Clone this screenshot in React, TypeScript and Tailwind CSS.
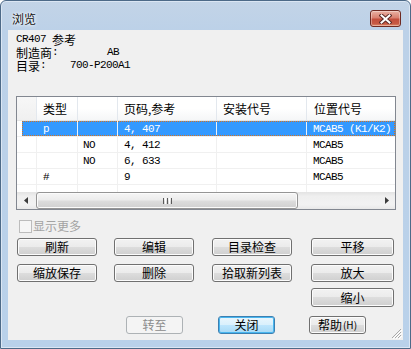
import React from 'react'

const MONO = "font-['Liberation_Mono','Noto_Sans_CJK_SC',monospace] text-[11px] tracking-[-0.6px]"
const CJK = "font-['Noto_Sans_CJK_SC',sans-serif] text-[12px]"

const rows = [
  { type: 'p', no: '', page: '4, 407', install: '', loc: 'MCAB5 (K1/K2)', selected: true },
  { type: '', no: 'NO', page: '4, 412', install: '', loc: 'MCAB5', selected: false },
  { type: '', no: 'NO', page: '6, 633', install: '', loc: 'MCAB5', selected: false },
  { type: '#', no: '', page: '9', install: '', loc: 'MCAB5', selected: false },
]

function Btn({ label, kind = 'normal', wide = false }: { label: string; kind?: 'normal' | 'default' | 'disabled'; wide?: boolean }) {
  const base = 'h-[18px] rounded-[3px] border flex items-center justify-center leading-none ' + CJK
  const size = wide ? ' w-[83px]' : ' w-[80px]'
  if (kind === 'disabled') {
    return <div className={base + ' w-[57px] border-[#adb2b5] bg-[#f4f4f4] text-[#8b8b8b]'}>{label}</div>
  }
  if (kind === 'default') {
    return (
      <div className={base + ' w-[57px] border-[#3c7fb1] bg-[linear-gradient(#eaf6fd_0%,#d9f0fc_50%,#bee6fd_50%,#a7d9f5_100%)] shadow-[inset_0_0_0_1px_#48b6ef] text-black'}>
        {label}
      </div>
    )
  }
  return (
    <div className={base + size + ' border-[#707070] bg-[linear-gradient(#f2f2f2_0%,#ebebeb_50%,#dddddd_50%,#cfcfcf_100%)] shadow-[inset_0_0_0_1px_#fcfcfc] text-black'}>
      {label}
    </div>
  )
}

export default function App() {
  return (
    <div className="w-[411px] h-[349px] rounded-t-[6px] border border-[#4d6a88] bg-[linear-gradient(#c3d4e7_0px,#bcd1e8_30px,#b9d1ea_100%)] shadow-[inset_0_0_0_1px_#dbe6f3] flex flex-col select-none">
      {/* title bar */}
      <div className="h-[29px] pt-[6px] flex items-center">
        <span className={CJK + ' ml-[11px] text-[#111] [text-shadow:0_0_5px_#fff,0_0_3px_#fff]'}>浏览</span>
        <div className="ml-auto mr-[9px] w-[31px] h-[17px] rounded-[3px] border border-[#6e2a22] bg-[linear-gradient(#e9b2a4_0%,#d98070_45%,#c24e3c_55%,#c75a44_85%,#e09070_100%)] shadow-[inset_0_0_0_1px_rgba(255,255,255,0.35)] flex items-center justify-center">
          <svg width="13" height="10" viewBox="0 0 13 10">
            <path d="M2.5 1.5 L10.5 8.5 M10.5 1.5 L2.5 8.5" stroke="#5a2a26" strokeWidth="4" strokeLinecap="square" />
            <path d="M2.5 1.5 L10.5 8.5 M10.5 1.5 L2.5 8.5" stroke="#fff" strokeWidth="2" strokeLinecap="square" />
          </svg>
        </div>
      </div>

      {/* client area */}
      <div className="relative mx-[7px] mb-[8px] flex-1 bg-[#f0f0f0] flex flex-col">
        <div className="h-[66px] pt-[3px] pl-[8px] text-black">
          <div className="h-[13px] flex items-center leading-none">
            <span className={MONO + ' whitespace-pre'}>CR407 </span>
            <span className={CJK}>参考</span>
          </div>
          <div className="h-[13px] flex items-center leading-none">
            <span className="w-[91px] flex items-center">
              <span className={CJK}>制造商</span>
              <span className={MONO}>:</span>
            </span>
            <span className={MONO}>AB</span>
          </div>
          <div className="h-[13px] flex items-center leading-none">
            <span className="w-[54px] flex items-center">
              <span className={CJK}>目录</span>
              <span className={MONO}>:</span>
            </span>
            <span className={MONO}>700-P200A1</span>
          </div>
        </div>

        {/* list view */}
        <div className="ml-[8px] w-[380px] h-[114px] border border-[#828790] bg-white flex flex-col">
          <div className={'h-[24px] grid grid-cols-[20px_41px_40px_99px_90px_1fr] border-b border-[#e5e5e5] bg-[linear-gradient(#ffffff,#ffffff_50%,#f5f6f7)] text-black ' + CJK}>
            <div className="border-r border-[#e3e8ee] bg-[linear-gradient(#f7f7f7,#f0f0f0)]" />
            <div className="border-r border-[#e3e8ee] pl-[6px] flex items-center">类型</div>
            <div className="border-r border-[#e3e8ee]" />
            <div className="border-r border-[#e3e8ee] pl-[6px] flex items-center">页码,参考</div>
            <div className="border-r border-[#e3e8ee] pl-[6px] flex items-center">安装代号</div>
            <div className="pl-[7px] flex items-center">位置代号</div>
          </div>

          {rows.map((r, i) =>
            r.selected ? (
              <div key={i} className="h-[16px] pl-[5px] border-b border-[#f0f0f0]">
                <div className={'h-full grid grid-cols-[15px_41px_40px_99px_90px_1fr] bg-[#3399ff] text-white outline outline-1 outline-dotted outline-offset-[-1px] outline-[#d7731f] ' + MONO}>
                  <div />
                  <div className="border-r border-[#e8f2fc] pl-[6px] flex items-center">{r.type}</div>
                  <div className="border-r border-[#e8f2fc] pl-[5px] flex items-center">{r.no}</div>
                  <div className="border-r border-[#e8f2fc] pl-[6px] flex items-center">{r.page}</div>
                  <div className="border-r border-[#e8f2fc] pl-[6px] flex items-center">{r.install}</div>
                  <div className="pl-[6px] flex items-center whitespace-pre">{r.loc}</div>
                </div>
              </div>
            ) : (
              <div key={i} className={'h-[16px] grid grid-cols-[20px_41px_40px_99px_90px_1fr] border-b border-[#f0f0f0] text-black ' + MONO}>
                <div className="border-r border-[#f0f0f0]" />
                <div className="border-r border-[#f0f0f0] pl-[6px] flex items-center">{r.type}</div>
                <div className="border-r border-[#f0f0f0] pl-[5px] flex items-center">{r.no}</div>
                <div className="border-r border-[#f0f0f0] pl-[6px] flex items-center">{r.page}</div>
                <div className="border-r border-[#f0f0f0] pl-[6px] flex items-center">{r.install}</div>
                <div className="pl-[6px] flex items-center">{r.loc}</div>
              </div>
            )
          )}
          <div className="flex-1 grid grid-cols-[20px_41px_40px_99px_90px_1fr]">
            <div className="border-r border-[#f0f0f0]" />
            <div className="border-r border-[#f0f0f0]" />
            <div className="border-r border-[#f0f0f0]" />
            <div className="border-r border-[#f0f0f0]" />
            <div className="border-r border-[#f0f0f0]" />
            <div />
          </div>

          {/* horizontal scrollbar */}
          <div className="h-[17px] flex bg-[linear-gradient(#e3e3e3,#efefef_25%,#f2f2f2_75%,#e8e8e8)]">
            <div className="w-[17px] flex items-center justify-center">
              <svg width="4" height="7" viewBox="0 0 4 7">
                <path d="M4 0 L0 3.5 L4 7 Z" fill="#3c3c3c" />
              </svg>
            </div>
            <div className="flex-1 flex">
              <div className="ml-[2px] w-[262px] rounded-[3px] border border-[#959595] bg-[linear-gradient(#f6f6f6,#ececec_45%,#dcdcdc_55%,#d0d0d0)] shadow-[inset_0_0_0_1px_#fbfbfb] flex items-center justify-center gap-[1px]">
                <div className="w-[1px] h-[6px] bg-[#5a5a5a]" />
                <div className="w-[1px] h-[6px] bg-white" />
                <div className="w-[1px] h-[6px] bg-[#5a5a5a]" />
                <div className="w-[1px] h-[6px] bg-white" />
                <div className="w-[1px] h-[6px] bg-[#5a5a5a]" />
              </div>
            </div>
            <div className="w-[17px] flex items-center justify-center">
              <svg width="4" height="7" viewBox="0 0 4 7">
                <path d="M0 0 L4 3.5 L0 7 Z" fill="#3c3c3c" />
              </svg>
            </div>
          </div>
        </div>

        {/* show more */}
        <div className="mt-[9px] ml-[11px] h-[14px] flex items-center">
          <div className="w-[13px] h-[13px] border border-[#bcbcbc] bg-[#f6f6f6]" />
          <span className={CJK + ' ml-[1px] text-[#a3a3a3] leading-none'}>显示更多</span>
        </div>

        {/* buttons */}
        <div className="mt-[5px] pl-[9px] grid grid-cols-[97px_98px_99px_83px] grid-rows-[26px_24px_19px] items-start">
          <Btn label="刷新" />
          <Btn label="编辑" />
          <Btn label="目录检查" />
          <Btn label="平移" wide />
          <Btn label="缩放保存" />
          <Btn label="删除" />
          <Btn label="拾取新列表" />
          <Btn label="放大" wide />
          <div />
          <div />
          <div />
          <div className="h-[19px] w-[83px] rounded-[3px] border border-[#707070] bg-[linear-gradient(#f2f2f2_0%,#ebebeb_50%,#dddddd_50%,#cfcfcf_100%)] shadow-[inset_0_0_0_1px_#fcfcfc] flex items-center justify-center leading-none text-black font-['Noto_Sans_CJK_SC',sans-serif] text-[12px]">
            缩小
          </div>
        </div>

        <div className="mt-[9px] pr-[37px] flex justify-end gap-[34px]">
          <div className="mr-[1px]">
            <Btn label="转至" kind="disabled" />
          </div>
          <Btn label="关闭" kind="default" />
          <div className="w-[57px] h-[18px] rounded-[3px] border border-[#707070] bg-[linear-gradient(#f2f2f2_0%,#ebebeb_50%,#dddddd_50%,#cfcfcf_100%)] shadow-[inset_0_0_0_1px_#fcfcfc] flex items-center justify-center leading-none text-black">
            <span className={CJK}>帮助</span>
            <span className="font-['Noto_Sans_CJK_SC',sans-serif] text-[10px] ml-[1px]">(H)</span>
          </div>
        </div>

        {/* resize grip */}
        <svg className="absolute right-[1px] bottom-[1px]" width="11" height="11" viewBox="0 0 11 11">
          <path d="M10 1 L1 10 M10 4 L4 10 M10 7 L7 10" stroke="#a8a8a8" strokeWidth="1" />
          <path d="M11 2 L2 11 M11 5 L5 11 M11 8 L8 11" stroke="#ffffff" strokeWidth="1" />
        </svg>
      </div>
    </div>
  )
}
